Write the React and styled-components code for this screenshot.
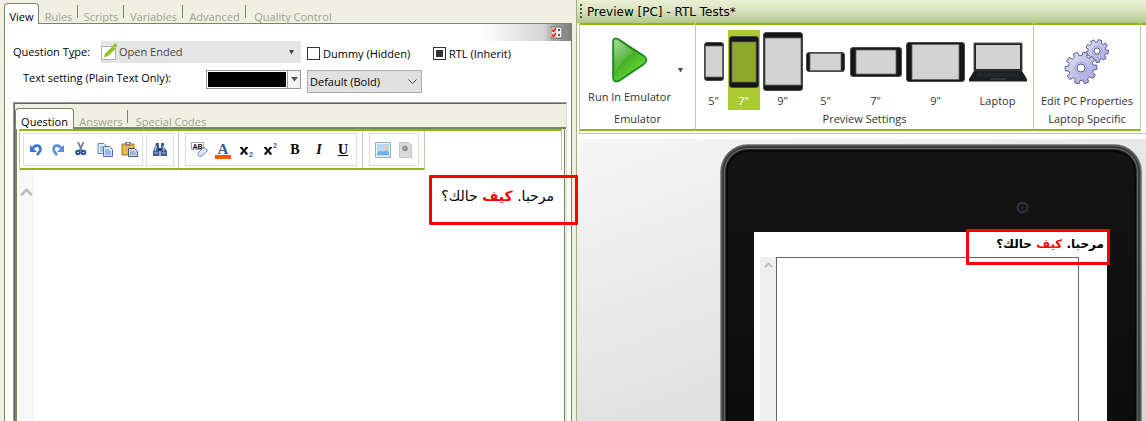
import React, { useEffect, useRef } from "react";
import styled, { createGlobalStyle, css } from "styled-components";

const ui = '"Open Sans", "Noto Sans", "DejaVu Sans", sans-serif';
const lime = "#8fb80c";
const moss = "#708a5c";
const sand = "#f1efe2";

const Global = createGlobalStyle`
  *, *::before, *::after { box-sizing: border-box; }
  body { margin: 0; background: ${sand}; font: 11px/16px ${ui}; color: #000; }
  button, select, input, textarea { font: inherit; color: inherit; margin: 0; }
  button { border: 0; padding: 0; background: none; cursor: pointer; white-space: nowrap; }
  svg { display: block; flex: none; }
`;

const Page = styled.div`
  display: grid;
  grid-template-columns: minmax(0, 576fr) minmax(0, 570fr);
  grid-template-rows: minmax(0, 1fr);
  height: 100vh;
  min-height: 400px;
  overflow: hidden;
`;

/* ---------- designer side ---------- */
const Designer = styled.section`
  min-width: 0;
  display: flex;
  flex-direction: column;
  padding: 3px 4px 0 4px;
`;

const Tabs = styled.div`
  display: flex;
  align-items: flex-end;
  height: ${(p) => (p.$inner ? 22 : 21)}px;
  padding-left: ${(p) => (p.$inner ? "1px" : 0)};
  flex: none;
  background: linear-gradient(${moss}, ${moss}) bottom / 100% ${(p) => (p.$inner ? 2 : 1)}px no-repeat;
`;

const Tab = styled.button`
  width: ${(p) => p.$w}px;
  height: 21px;
  padding-top: 6px;
  line-height: 16px;
  text-align: center;
  color: #a09f91;
  ${(p) =>
    p.$active &&
    css`
      color: #000;
      background: #fff;
      border: 1px solid ${moss};
      border-bottom: 0;
      border-radius: 4px 4px 0 0;
      padding-top: 5px;
    `}
  ${(p) =>
    p.$divided &&
    css`
      background: linear-gradient(${moss}, ${moss}) right 2px / 1px 13px no-repeat;
    `}
`;

const Panel = styled.div`
  flex: 1;
  min-height: 0;
  display: flex;
  flex-direction: column;
  background: #fff;
  border: 1px solid ${moss};
  border-width: 0 1px;
`;

const Strip = styled.div`
  display: flex;
  justify-content: flex-end;
  align-items: center;
  align-self: flex-end;
  width: 90px;
  height: 17px;
  padding-right: 8px;
  background: linear-gradient(to right, #fff, #d4d4d4 70%, #a8a8a8 80%, #808080);
`;

const Row = styled.div`
  display: flex;
  align-items: ${(p) => p.$align || "center"};
  padding-left: ${(p) => p.$indent}px;
  padding-top: ${(p) => p.$top || 0}px;
  flex: none;
`;

const Label = styled.label`
  width: ${(p) => p.$w}px;
  white-space: nowrap;
  flex: none;
`;

const TypeField = styled.div`
  display: flex;
  align-items: center;
  width: 200px;
  height: 22px;
  padding-right: 7px;
  background: #e5e5e5;
  color: #444;
`;

const PlainSelect = styled.select`
  appearance: none;
  border: 0;
  background: none;
  flex: 1;
  min-width: 0;
  padding: 0 0 0 2px;
  outline: 0;
`;

const Tick = styled.label`
  display: flex;
  align-items: center;
  gap: 3px;
  width: ${(p) => p.$w}px;
  margin-left: 6px;
  padding-top: 3px;
  white-space: nowrap;
`;

const TickInput = styled.input`
  appearance: none;
  flex: none;
  width: 13px;
  height: 13px;
  border: 1px solid #333;
  background: #fff;
  &:indeterminate {
    background: #333;
    box-shadow: inset 0 0 0 2px #fff;
  }
`;

const ColorButton = styled.button`
  display: flex;
  width: 95px;
  height: 19px;
  border: 1px solid #999;
  background: #fff;
`;

const Swatch = styled.span`
  flex: 1;
  height: 15px;
  margin: 1px;
  background: #000;
`;

const Drop = styled.span`
  display: flex;
  align-items: center;
  justify-content: center;
  width: 13px;
  height: 17px;
  border-left: 1px solid #999;
  background: #f3f3f3;
`;

const WeightField = styled.div`
  display: flex;
  align-items: center;
  width: 115px;
  height: 23px;
  margin-left: 6px;
  padding-right: 4px;
  border: 1px solid #adadad;
  background: #e1e1e1;
`;

const Inner = styled.div`
  flex: 1;
  min-height: 0;
  display: flex;
  flex-direction: column;
  margin: 9px 4px 0 8px;
  padding-top: 4px;
  border: 1px solid #999;
  border-width: 1px 1px 0 1px;
  border-right-color: #ddd;
  box-shadow: inset 1px 1px 0 #666;
  background: ${sand};
`;

const EditorFrame = styled.div`
  flex: 1;
  min-height: 0;
  display: flex;
  flex-direction: column;
  margin: 0 1px;
  padding: 0 2px;
  border: solid ${moss};
  border-width: 0 1px 0 2px;
  background: #fff;
`;

const ToolRibbon = styled.div`
  display: flex;
  height: 41px;
  flex: none;
  border-top: 2px solid ${lime};
  border-left: 1px solid #c4c4b4;
  border-right: 1px solid #c4c4b4;
`;

const ToolGroup = styled.div`
  display: flex;
  gap: 3px;
  height: 39px;
  padding: 2px ${(p) => p.$right}px 0 ${(p) => p.$left}px;
  border-right: 1px solid #c4c4b4;
  border-bottom: 2px solid ${lime};
`;

const ToolBox = styled.div`
  display: flex;
  align-items: center;
  justify-content: center;
  height: 33px;
  padding: 0 1px;
  border: 1px solid #ddd;
`;

const Tool = styled.button`
  display: flex;
  align-items: center;
  justify-content: center;
  width: ${(p) => p.$w || 24}px;
  height: 28px;
`;

const EditArea = styled.div`
  display: flex;
  flex: 1;
  min-height: 0;
`;

const Gutter = styled.div`
  display: flex;
  justify-content: center;
  width: ${(p) => p.$w}px;
  padding-top: ${(p) => p.$top}px;
  background: ${(p) => p.$bg};
`;

const EditText = styled.div`
  position: relative;
  flex: 1;
  padding: 14px 8px 0;
  text-align: right;
  outline: 0;
  font: 14px/24px "DejaVu Sans", sans-serif;
`;

const Red = styled.b`
  color: #f00;
`;

const Callout = styled.span`
  position: absolute;
  z-index: 5;
  top: ${(p) => p.$top}px;
  right: ${(p) => p.$right}px;
  width: ${(p) => p.$w}px;
  height: ${(p) => p.$h}px;
  border: 3px solid #f00;
  border-radius: 1px;
  pointer-events: none;
`;

/* ---------- preview side ---------- */
const Preview = styled.section`
  min-width: 0;
  display: flex;
  flex-direction: column;
  border-left: 1px solid #9cb479;
  background: #fff;
`;

const TitleBar = styled.header`
  display: flex;
  align-items: center;
  gap: 4px;
  height: 23px;
  flex: none;
  padding-left: 3px;
  background: linear-gradient(#eaf0d4, #dde6c2 40%, #b2c68e);
  font: 12px/16px "DejaVu Sans", sans-serif;
`;

const Ribbon = styled.div`
  display: flex;
  flex: none;
  height: 111px;
  margin-left: 2px;
  padding-right: 5px;
  border-left: 1px solid #c4c4b4;
  border-bottom: 1px solid #c4c4b4;
  background: linear-gradient(${lime}, ${lime}) top / 100% 2px no-repeat;
  color: #333;
`;

const Group = styled.div`
  display: flex;
  flex-direction: column;
  align-items: center;
  flex: ${(p) => (p.$grow ? "1 0 auto" : "none")};
  width: ${(p) => p.$w}px;
  height: 108px;
  padding-top: 7px;
  border-right: 1px solid #c4c4b4;
  border-bottom: 2px solid ${lime};
`;

const GroupBody = styled.div`
  display: flex;
  justify-content: center;
  height: 80px;
`;

const GroupName = styled.div`
  margin-top: 1px;
  white-space: nowrap;
`;

const Choice = styled.button`
  display: flex;
  flex-direction: column;
  align-items: center;
  width: ${(p) => p.$w}px;
  height: 80px;
  background: ${(p) => (p.$on ? "#a9cb30" : "none")};
  color: ${(p) => (p.$on ? "#fff" : "#333")};
`;

const Art = styled.span`
  display: flex;
  align-items: center;
  justify-content: center;
  height: ${(p) => p.$h || 63}px;
`;

const MenuButton = styled.button`
  display: flex;
  align-items: center;
  width: 16px;
  height: 80px;
  justify-content: center;
`;

const Stage = styled.div`
  flex: 1;
  min-height: 0;
  display: flex;
  margin-top: 5px;
  padding: 5px 4px 0 143px;
  overflow: hidden;
  background: linear-gradient(160deg, #f6f6f6, #e2e2e2 60%, #d6d6d6);
`;

const Tablet = styled.div`
  flex: 1;
  min-width: 0;
  display: flex;
  flex-direction: column;
  margin-bottom: -12px;
  padding: 0 34px 0 33px;
  border: 1px solid #8a8c8b;
  border-radius: 28px 28px 0 0;
  background: linear-gradient(#141414, #0c0c0c);
  box-shadow: inset 0 0 0 1px #5d605f, inset 0 0 0 3px #3a3c3b, inset 0 0 0 4px #666, inset 0 0 0 5px #2c2c2c, inset 0 0 0 7px #080808;
`;

const Bezel = styled.div`
  display: flex;
  justify-content: flex-end;
  height: 87px;
  flex: none;
  padding: 56px 78px 0 0;
`;

const Screen = styled.div`
  position: relative;
  flex: 1;
  min-height: 0;
  display: flex;
  flex-direction: column;
  background: #fff;
`;

const Prompt = styled.div`
  flex: none;
  height: 25px;
  padding: 2px 3px 0;
  text-align: right;
  font: bold 12px/20px "DejaVu Sans", sans-serif;
`;

const AnswerRow = styled.div`
  display: flex;
  flex: 1;
  min-height: 0;
  padding: 0 28px 0 6px;
`;

const Answer = styled.textarea`
  flex: 1;
  min-width: 0;
  resize: none;
  border: 1px solid #666;
  border-bottom: 0;
  border-radius: 0;
  outline: 0;
  background: #fff;
`;

/* ---------- drawings ---------- */
const Triangle = ({ w = 6, c = "#444" }) => (
  <svg width={w} height="5" viewBox="0 0 6 5" preserveAspectRatio="none"><path d="M0 0h6L3 4.5z" fill={c} /></svg>
);
const ChevronUp = ({ w, sw }) => (
  <svg width={w} height={w} viewBox="0 0 12 12"><path d="M1 8.5 6 3.5l5 5" fill="none" stroke="#bdbdbd" strokeWidth={sw} /></svg>
);
const Pencil = () => (
  <svg width="16" height="18" viewBox="0 0 16 18">
    <path d="M.5 3.500h14v13H.5z" fill="#fff" stroke="#aaa" />
    <path d="M3 14.500l1-4 7.500-7 3 2.500-7.500 7z" fill="#8fc31f" /><circle cx="14" cy="2.500" r="2" fill="#8fc31f" />
  </svg>
);
const Checklist = () => (
  <svg width="12" height="13" viewBox="0 0 12 13">
    <path d="M0 1h10l1 2v9H0z" fill="#eee" stroke="#555" strokeWidth=".8" />
    <path d="M1 2h4v4H1zM1 7h4v4H1z" fill="#f7b5a8" /><path d="M1 4l1.500 1.500L5 2M1 9l1.500 1.500L5 7" fill="none" stroke="#d21" strokeWidth="1.300" />
    <path d="M7 4h2M7 9h2" stroke="#222" strokeWidth="1.500" />
  </svg>
);
const Undo = ({ flip }) => (
  <svg width="14" height="14" viewBox="0 0 14 14">
    <g transform={flip ? "translate(14 0) scale(-1 1)" : undefined}>
      <path d="M3.500 6C5 2 11 1 11.500 6c0 2.500-1.500 4-3.500 6" fill="none" stroke={flip ? "#5590e0" : "#3d78d8"} strokeWidth="2.600" />
      <path d="M1 2v7h7z" fill={flip ? "#5590e0" : "#3d78d8"} />
    </g>
  </svg>
);
const Cut = () => (
  <svg width="12" height="15" viewBox="0 0 12 15">
    <path d="M3 0l4 9M8.500 0L4.500 9" stroke="#6f7d95" strokeWidth="1.800" />
    <circle cx="3" cy="10.500" r="1.800" fill="none" stroke="#29519c" strokeWidth="2" /><circle cx="8.500" cy="10.500" r="1.800" fill="none" stroke="#29519c" strokeWidth="2" />
  </svg>
);
const Copy = () => (
  <svg width="16" height="14" viewBox="0 0 16 14">
    <path d="M1 .5h6l3 3v7H1z" fill="#e3edfb" stroke="#6283bd" /><path d="M3 4h4M3 6h4M3 8h3" stroke="#7ba0d8" />
    <path d="M6.500 3.500h6l3 3v7h-9z" fill="#d6e4f9" stroke="#4c6fae" /><path d="M8 7h4M8 9h6M8 11h6" stroke="#5c87cb" />
  </svg>
);
const Paste = () => (
  <svg width="17" height="15" viewBox="0 0 17 15">
    <path d="M1 2h12v11H1z" fill="#e9b949" stroke="#a87716" /><path d="M4 0h6v4H4z" fill="#8b8b80" /><path d="M6 1h2v1H6z" fill="#fff" />
    <path d="M7.500 6.500h6l3 3v5h-9z" fill="#cfdcf0" stroke="#44597f" /><path d="M9 10h5M9 12h6" stroke="#6f8fbe" />
  </svg>
);
const Binoculars = () => (
  <svg width="16" height="15" viewBox="0 0 16 15">
    <path d="M4 1h3v4l.500 3v6H1V9l2-4zM9 1h3v4l3 4v5H8.500V8L9 5z" fill="#3c5f97" /><path d="M6 6h4v3H6z" fill="#24406e" />
    <path d="M4.500 4L3 9M11 4l1 5" stroke="#b8cdea" strokeWidth="1.200" /><path d="M2 11h4M10 11h4" stroke="#9db8e0" />
  </svg>
);
const ClearFormat = () => (
  <svg width="17" height="17" viewBox="0 0 17 17">
    <path d="M.5 1.500h12v7H.5z" fill="#fff" stroke="#9aa9bd" />
    <text x="1.500" y="8" fontSize="7" fontWeight="700" fontFamily="Liberation Sans, sans-serif" fill="#111">AB</text>
    <path d="M7 12l5-5q2-1 3.500 1t0 3l-5 4q-2 1-3-.5t-.5-2.500z" fill="#dce7f8" stroke="#7086b0" />
  </svg>
);
const FontColor = () => (
  <svg width="16" height="20" viewBox="0 -3 16 20">
    <text x="8" y="11" textAnchor="middle" fontSize="15" fontWeight="700" fontFamily="Liberation Serif, serif" fill="#3a5896">A</text>
    <path d="M0 12h16v4H0z" fill="#ff5410" />
  </svg>
);
const ScriptX = ({ up }) => (
  <svg width="16" height="16" viewBox="0 0 16 16">
    <path d="M2 5.500l6 6.500M8 5.500L2 12" stroke="#111" strokeWidth="2" /><path d="M1 5.500h3M6.500 5.500H9M1 12h3M6.500 12H9" stroke="#111" />
    <text x="10" y={up ? 6 : 15} fontSize="7" fontWeight="700" fontFamily="Liberation Sans, sans-serif" fill="#2a5bb5">2</text>
  </svg>
);
const Letter = styled.span`
  font: ${(p) => (p.$italic ? "italic " : "")}bold 14px/16px "Liberation Serif", serif;
  text-decoration: ${(p) => (p.$under ? "underline" : "none")};
`;
const Picture = () => (
  <svg width="16" height="16" viewBox="0 0 16 16">
    <path d="M.5.500h15v15H.5z" fill="#eaf3fd" stroke="#92add5" /><path d="M2 2h12v12H2z" fill="#b5daf6" />
    <path d="M2 11q3-4 6-1 3-3 6 0v3H2z" fill="#78aede" /><circle cx="10.500" cy="5.500" r="1.800" fill="#f8ce96" />
  </svg>
);
const DocGrey = () => (
  <svg width="13" height="16" viewBox="0 0 13 16">
    <path d="M.5.500h9l3 3v12H.5z" fill="#d8d8d8" stroke="#c5c5c5" /><circle cx="6" cy="6.500" r="2.700" fill="#8b8b8b" /><circle cx="5.500" cy="6" r="1" fill="#bbb" />
  </svg>
);
const Play = () => (
  <svg width="36" height="46" viewBox="0 0 36 46">
    <defs>
      <linearGradient id="play" x1="0" y1="0" x2=".7" y2="1"><stop offset="0" stopColor="#a2d890" /><stop offset=".45" stopColor="#3faa22" /><stop offset="1" stopColor="#72e23e" /></linearGradient>
    </defs>
    <path d="M1 5Q1 0 6 2L32 19q5 4 0 8L7 44q-6 2-6-4z" fill="url(#play)" stroke="#17861a" strokeWidth="1.600" />
    <path d="M3 6q0-4 4-1l15 10Q12 20 3 34z" fill="#fff" opacity=".18" />
  </svg>
);
const Device = ({ w, h, cap, side, screen = "#d3d3d3" }) => (
  <svg width={w} height={h}>
    <rect x=".5" y=".5" width={w - 1} height={h - 1} rx="2.500" fill="#161616" stroke="#4a4a4a" />
    <rect x={side} y={cap} width={w - 2 * side} height={h - 2 * cap} fill={screen} stroke="#666" strokeWidth=".8" />
  </svg>
);
const Laptop = () => (
  <svg width="58" height="40" viewBox="0 0 58 40">
    <path d="M5 1h48v28H5z" fill="#222" stroke="#555" /><path d="M7 3h44v24H7z" fill="#d3d3d3" />
    <path d="M5 29h48l5 8v2.500H0V37z" fill="#1c1f20" /><path d="M9 32h40M8 34h42" stroke="#33383a" strokeDasharray="2 1" />
    <path d="M22 36h14l1 2H21z" fill="#34383a" />
  </svg>
);
const cog = (cx, cy, r, n) => {
  const pts = [];
  for (let i = 0; i < n; i++) {
    [[-0.32, 0.78], [-0.22, 1], [0.22, 1], [0.32, 0.78]].forEach(([o, k]) => {
      const a = ((i + o) * 2 * Math.PI) / n - 1.3;
      pts.push(`${(cx + Math.cos(a) * r * k).toFixed(1)} ${(cy + Math.sin(a) * r * k).toFixed(1)}`);
    });
  }
  return `M${pts.join("L")}Z`;
};
const Gears = () => (
  <svg width="46" height="46" viewBox="0 0 46 46">
    <defs><linearGradient id="cog" x1="0" y1="0" x2="1" y2="1"><stop offset="0" stopColor="#e2e4f8" /><stop offset="1" stopColor="#a0a2d8" /></linearGradient></defs>
    <g fill="url(#cog)" stroke="#5c5d96" strokeLinejoin="round">
      <path d={cog(33, 12, 11.5, 9)} /><path d={cog(17, 29, 16, 10)} />
      <circle cx="33" cy="12" r="3" fill="#fff" /><circle cx="17" cy="29" r="4" fill="#fff" />
    </g>
    <circle cx="33" cy="12" r="5" fill="none" stroke="#a5a8de" /><circle cx="17" cy="29" r="6" fill="none" stroke="#a5a8de" />
  </svg>
);
const Grip = () => (
  <svg width="3" height="15" viewBox="0 0 3 15"><path d="M1 0v15" stroke="#4b5a37" strokeWidth="2" strokeDasharray="2 2" /></svg>
);
const Camera = () => (
  <svg width="13" height="13" viewBox="0 0 13 13">
    <circle cx="6.500" cy="6.500" r="6" fill="#303134" /><circle cx="6.500" cy="6.500" r="3.500" fill="#111217" /><circle cx="6.500" cy="6.500" r="1.500" fill="#26295c" />
  </svg>
);

const devices = [
  { name: '5"', w: 28, art: <Device w={20} h={39} cap={4} side={1.5} /> },
  { name: '7"', w: 32, on: true, art: <Device w={30} h={52} cap={6} side={3} screen="#8da82a" /> },
  { name: '9"', w: 46, art: <Device w={40} h={59} cap={6} side={2} /> },
  { name: '5"', w: 40, art: <Device w={39} h={20} cap={1.5} side={4} /> },
  { name: '7"', w: 60, art: <Device w={52} h={30} cap={3} side={6} /> },
  { name: '9"', w: 60, art: <Device w={59} h={40} cap={2.5} side={6} /> },
  { name: "Laptop", w: 64, art: <Laptop /> },
];

const Greeting = () => (
  <span dir="rtl" lang="ar">مرحبا. <Red>كيف</Red> حالك؟</span>
);

export default function App() {
  const rtl = useRef(null);
  useEffect(() => {
    rtl.current.indeterminate = true;
  }, []);

  return (
    <>
      <Global />
      <Page>
        <Designer>
          <Tabs>
            <Tab $w={35} $active>View</Tab>
            <Tab $w={39} $divided>Rules</Tab>
            <Tab $w={46} $divided>Scripts</Tab>
            <Tab $w={59} $divided>Variables</Tab>
            <Tab $w={63} $divided>Advanced</Tab>
            <Tab $w={94}>Quality Control</Tab>
          </Tabs>
          <Panel>
            <Strip><Checklist /></Strip>
            <Row $indent={8}>
              <Label $w={88} htmlFor="qtype">Question T<u>y</u>pe:</Label>
              <TypeField>
                <Pencil />
                <PlainSelect id="qtype"><option>Open Ended</option></PlainSelect>
                <Triangle w={5} />
              </TypeField>
              <Tick $w={120}><TickInput type="checkbox" />Dummy (Hidden)</Tick>
              <Tick $w={90}><TickInput type="checkbox" ref={rtl} />RTL (Inherit)</Tick>
            </Row>
            <Row $indent={18} $top={7} $align="flex-start">
              <Label $w={183} htmlFor="textcolor">Text setting (Plain Text Only):</Label>
              <ColorButton id="textcolor"><Swatch /><Drop><Triangle w={7} c="#555" /></Drop></ColorButton>
              <WeightField>
                <PlainSelect aria-label="Font weight"><option>Default (Bold)</option></PlainSelect>
                <svg width="9" height="6" viewBox="0 0 9 6"><path d="M.5.500l4 4 4-4" fill="none" stroke="#444" /></svg>
              </WeightField>
            </Row>
            <Inner>
              <Tabs $inner>
                <Tab $w={59} $active>Question</Tab>
                <Tab $w={54} $divided>Answers</Tab>
                <Tab $w={86}>Special Codes</Tab>
              </Tabs>
              <EditorFrame>
                <ToolRibbon>
                  <ToolGroup $left={3} $right={4}>
                    <ToolBox>
                      <Tool $w={22} aria-label="Undo"><Undo /></Tool>
                      <Tool $w={22} aria-label="Redo"><Undo flip /></Tool>
                      <Tool aria-label="Cut"><Cut /></Tool>
                      <Tool aria-label="Copy"><Copy /></Tool>
                      <Tool aria-label="Paste"><Paste /></Tool>
                    </ToolBox>
                    <ToolBox><Tool aria-label="Find"><Binoculars /></Tool></ToolBox>
                  </ToolGroup>
                  <ToolGroup $left={6} $right={5}>
                    <ToolBox>
                      <Tool aria-label="Clear formatting"><ClearFormat /></Tool>
                      <Tool aria-label="Font color"><FontColor /></Tool>
                      <Tool aria-label="Subscript"><ScriptX /></Tool>
                      <Tool aria-label="Superscript"><ScriptX up /></Tool>
                      <Tool><Letter>B</Letter></Tool>
                      <Tool><Letter $italic>I</Letter></Tool>
                      <Tool><Letter $under>U</Letter></Tool>
                    </ToolBox>
                  </ToolGroup>
                  <ToolGroup $left={6} $right={5}>
                    <ToolBox>
                      <Tool $w={23} aria-label="Insert image"><Picture /></Tool>
                      <Tool $w={23} aria-label="Insert file"><DocGrey /></Tool>
                    </ToolBox>
                  </ToolGroup>
                </ToolRibbon>
                <EditArea>
                  <Gutter $w={15} $top={16} $bg="#f8f8f8"><ChevronUp w={13} sw={2.4} /></Gutter>
                  <EditText role="textbox" aria-label="Question text" tabIndex={0}>
                    <Greeting />
                    <Callout $top={5} $right={-16} $w={149} $h={50} />
                  </EditText>
                </EditArea>
              </EditorFrame>
            </Inner>
          </Panel>
        </Designer>

        <Preview>
          <TitleBar><Grip />Preview [PC] - RTL Tests*</TitleBar>
          <Ribbon>
            <Group $w={116}>
              <GroupBody>
                <Choice $w={86}><Art $h={59}><Play /></Art>Run In Emulator</Choice>
                <MenuButton aria-label="Emulator options"><Triangle w={5} /></MenuButton>
              </GroupBody>
              <GroupName>Emulator</GroupName>
            </Group>
            <Group $w={338} $grow>
              <GroupBody>
                {devices.map((d, i) => (
                  <Choice key={i} $w={d.w} $on={d.on}><Art>{d.art}</Art>{d.name}</Choice>
                ))}
              </GroupBody>
              <GroupName>Preview Settings</GroupName>
            </Group>
            <Group $w={107}>
              <GroupBody>
                <Choice $w={104}><Art><Gears /></Art>Edit PC Properties</Choice>
              </GroupBody>
              <GroupName>Laptop Specific</GroupName>
            </Group>
          </Ribbon>
          <Stage>
            <Tablet>
              <Bezel><Camera /></Bezel>
              <Screen>
                <Prompt><Greeting /></Prompt>
                <AnswerRow>
                  <Gutter $w={16} $top={4} $bg="#efefef"><ChevronUp w={9} sw={2.4} /></Gutter>
                  <Answer aria-label="Answer" dir="rtl" />
                </AnswerRow>
                <Callout $top={-3} $right={-3} $w={144} $h={36} />
              </Screen>
            </Tablet>
          </Stage>
        </Preview>
      </Page>
    </>
  );
}
